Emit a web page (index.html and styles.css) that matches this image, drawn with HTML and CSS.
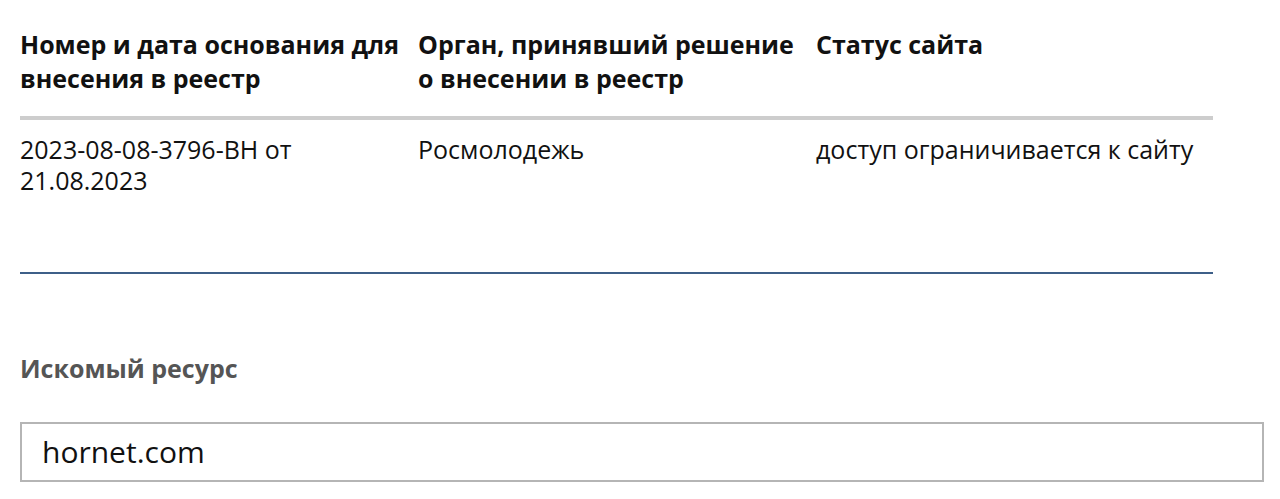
FILE: index.html
```html
<!DOCTYPE html>
<html lang="ru">
<head>
<meta charset="utf-8">
<link rel="stylesheet" href="styles.css">
</head>
<body>
<div class="page">
  <div class="table">
    <div class="row head">
      <div class="cell">Номер и дата основания для внесения в реестр</div>
      <div class="cell">Орган, принявший решение о внесении в реестр</div>
      <div class="cell">Статус сайта</div>
    </div>
    <div class="row body">
      <div class="cell">2023-08-08-3796-ВН от 21.08.2023</div>
      <div class="cell">Росмолодежь</div>
      <div class="cell">доступ ограничивается к сайту</div>
    </div>
  </div>
  <div class="search">
    <div class="label">Искомый ресурс</div>
    <div class="input">hornet.com</div>
  </div>
</div>
</body>
</html>
```
FILE: styles.css
```css
html, body {
  margin: 0;
  padding: 0;
  background: #fff;
}
body {
  font-family: "Open Sans", "Noto Sans", sans-serif;
  color: #111;
}
.page {
  padding: 27px 17px 0 20px;
}
.table {
  width: 1193px;
  border-bottom: 2px solid #3d5f88;
}
.row {
  display: grid;
  grid-template-columns: 398px 398px 1fr;
}
.head {
  font-weight: 700;
  font-size: 25px;
  line-height: 34px;
  padding-bottom: 21px;
  border-bottom: 4px solid #cdcdcd;
}
.cell {
  padding-right: 4px;
}
.body {
  font-size: 25px;
  line-height: 31px;
  padding: 14px 0 76px;
}
.search {
  padding-top: 77px;
}
.label {
  font-weight: 700;
  font-size: 25px;
  line-height: 34px;
  color: #555;
}
.input {
  margin-top: 37px;
  width: 1220px;
  height: 56px;
  border: 2px solid #b5b5b5;
  font-size: 30px;
  line-height: 56px;
  padding-left: 20px;
  color: #111;
}
```
